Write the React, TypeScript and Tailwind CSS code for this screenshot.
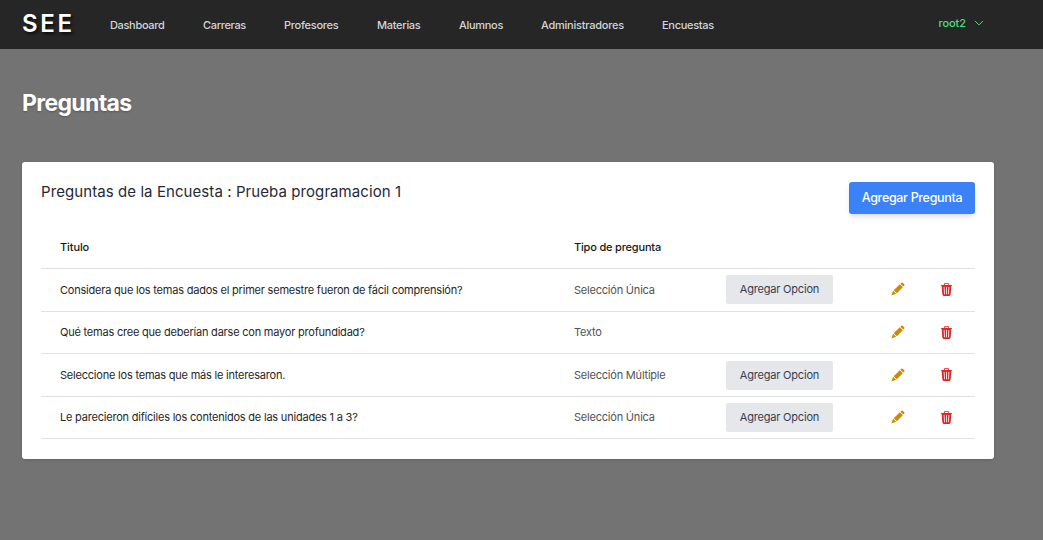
import { BsTrash3Fill } from "react-icons/bs";

const links = [
  { label: "Dashboard", style: "w-[93px] tracking-[-0.33px]" },
  { label: "Carreras", style: "w-[81px] tracking-[-0.33px]" },
  { label: "Profesores", style: "w-[93px] tracking-[-0.26px]" },
  { label: "Materias", style: "w-[82px] tracking-[-0.28px]" },
  { label: "Alumnos", style: "w-[82px] tracking-[-0.3px]" },
  { label: "Administradores", style: "w-[121px] tracking-[-0.24px]" },
  { label: "Encuestas", style: "tracking-[-0.3px]" },
];

const questions = [
  { title: "Considera que los temas dados el primer semestre fueron de fácil comprensión?", type: "Selección Única", options: true, height: "h-[43px]", lift: "pb-[2px]" },
  { title: "Qué temas cree que deberían darse con mayor profundidad?", type: "Texto", options: false, height: "h-[42px]", lift: "pb-px" },
  { title: "Seleccione los temas que más le interesaron.", type: "Selección Múltiple", options: true, height: "h-[43px]", lift: "pb-px" },
  { title: "Le parecieron difíciles los contenidos de las unidades 1 a 3?", type: "Selección Única", options: true, height: "h-[42px]", lift: "pb-px" },
];

function Pencil() {
  return (
    <svg width="14" height="14" viewBox="0 0 14 14" fill="currentColor">
      <path d="M10.3.8a1 1 0 0 1 1.4 0l1.5 1.5a1 1 0 0 1 0 1.4l-.9.9-2.9-2.9z" />
      <path d="M8.8 2.2l3 3-6 6.1-3.1-3.1z" />
      <path d="M2.1 8.8l3 3L.4 13.5z" />
    </svg>
  );
}

export default function App() {
  return (
    <div className="h-[540px] overflow-hidden bg-[#737373] font-['Inter','Liberation_Sans',sans-serif] text-[11px]">
      <nav className="flex h-[49px] items-center bg-[#262626] pl-[22px]">
        <div className="w-[88px] pb-px text-[24px] leading-8 font-semibold tracking-[2.7px] text-white [text-shadow:2px_2px_3px_rgba(0,0,0,0.7)]">
          SEE
        </div>
        <div className="flex flex-1 pt-px font-medium text-[#d1d5db]">
          {links.map((link) => (
            <a key={link.label} className={link.style}>{link.label}</a>
          ))}
        </div>
        <button className="mr-[59px] flex items-center gap-2 pb-[3px] font-medium tracking-[-0.05px] text-[#4ade80]">
          root2
          <svg width="10" height="6" viewBox="0 0 10 6" fill="none" stroke="currentColor">
            <path d="M1 .9l4 4 4-4" />
          </svg>
        </button>
      </nav>

      <main className="pr-[49px] pl-[22px]">
        <h1 className="flex h-[113px] items-start pt-[38px] text-[23px] leading-8 font-bold tracking-[-0.65px] text-white [text-shadow:0_1px_2px_rgba(0,0,0,0.25)]">
          Preguntas
        </h1>

        <section className="h-[297px] rounded-[3px] bg-white px-[19px] shadow-sm">
          <header className="flex h-[65px] items-start justify-between pt-5">
            <h2 className="text-[15px] leading-5 tracking-[0.08px] text-[#1f2937]">
              Preguntas de la Encuesta : Prueba programacion 1
            </h2>
            <button className="h-8 w-[126px] rounded-[3px] bg-[#3b82f6] text-center text-[12.5px] font-medium tracking-[-0.32px] whitespace-nowrap text-white shadow-md">
              Agregar Pregunta
            </button>
          </header>

          <div className="flex h-[42px] items-center border-b border-[#e0e2e5] pl-[19px] font-medium text-neutral-900">
            <div className="w-[514px] tracking-[-0.1px]">Titulo</div>
            <div className="tracking-[-0.18px]">Tipo de pregunta</div>
          </div>
          {questions.map((question) => (
            <div
              key={question.title}
              className={`flex items-center border-b border-[#e0e2e5] pl-[19px] tracking-[-0.21px] ${question.height}`}
            >
              <div className="w-[514px] text-neutral-800">{question.title}</div>
              <div className="w-[152px] text-neutral-600">{question.type}</div>
              <div className={`w-[165px] ${question.options && question.lift === "pb-[2px]" ? "pb-[2px]" : ""}`}>
                {question.options && (
                  <button className="block h-[29px] w-[107px] rounded-[2px] bg-[#e5e7eb] text-center tracking-[-0.2px] text-[#374151]">
                    Agregar Opcion
                  </button>
                )}
              </div>
              <button className={`w-[49px] text-[#ca8a04] ${question.lift}`}><Pencil /></button>
              <button className={`text-[#dc2626] ${question.lift}`}><BsTrash3Fill size={13} /></button>
            </div>
          ))}
        </section>
      </main>
    </div>
  );
}
